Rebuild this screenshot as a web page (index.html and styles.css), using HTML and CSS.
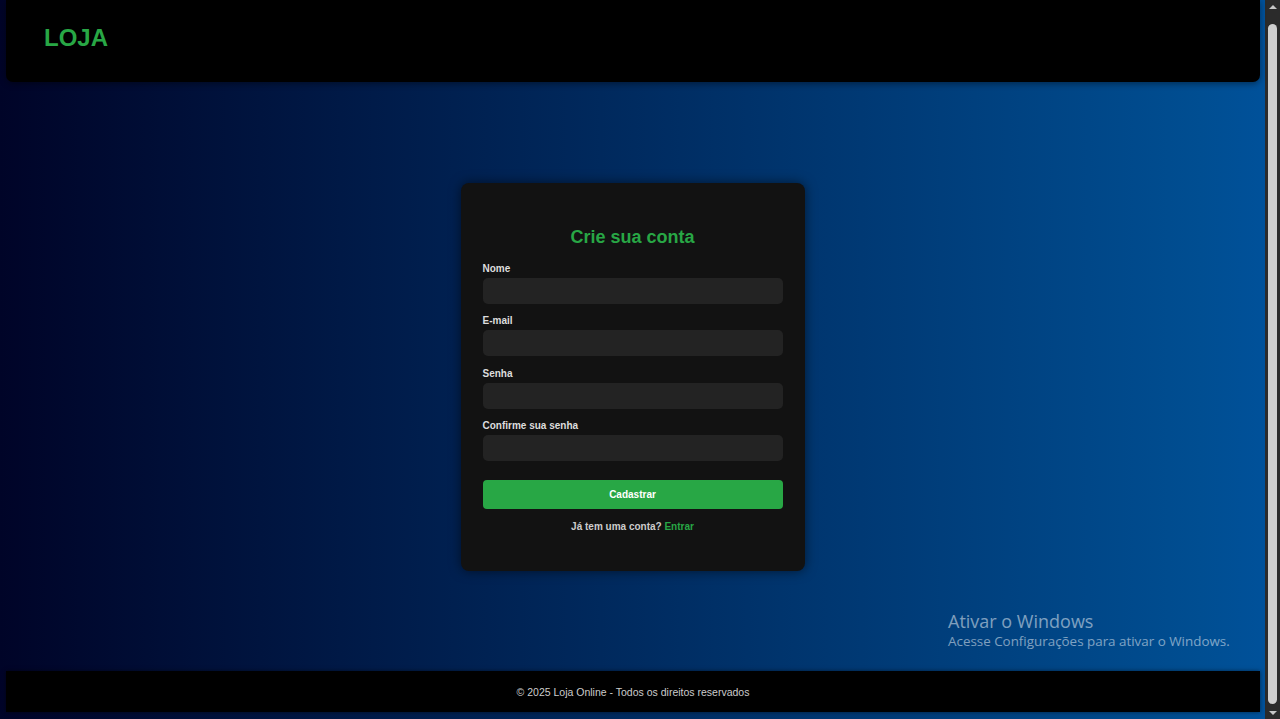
FILE: index.html
```html
<!DOCTYPE html>
<html lang="pt-BR">
<head>
<meta charset="utf-8">
<title>Loja - Cadastro</title>
<link rel="stylesheet" href="styles.css">
</head>
<body>
<div class="app">
  <div class="page">
    <header class="topbar">
      <h1 class="logo">LOJA</h1>
    </header>
    <main class="main">
      <form class="card">
        <h2 class="card-title">Crie sua conta</h2>
        <div class="field">
          <label class="label">Nome</label>
          <input class="input" type="text">
        </div>
        <div class="field">
          <label class="label">E-mail</label>
          <input class="input" type="email">
        </div>
        <div class="field">
          <label class="label">Senha</label>
          <input class="input" type="password">
        </div>
        <div class="field">
          <label class="label">Confirme sua senha</label>
          <input class="input" type="password">
        </div>
        <button class="btn" type="button">Cadastrar</button>
        <p class="alt">Já tem uma conta? <a class="alt-link" href="#">Entrar</a></p>
      </form>
    </main>
    <footer class="footer">© 2025 Loja Online - Todos os direitos reservados</footer>
    <div class="watermark">
      <div class="wm-title">Ativar o Windows</div>
      <div class="wm-sub">Acesse Configurações para ativar o Windows.</div>
    </div>
  </div>
  <div class="scrollbar">
    <span class="arrow arrow-up"></span>
    <span class="thumb"></span>
    <span class="arrow arrow-down"></span>
  </div>
</div>
</body>
</html>
```
FILE: styles.css
```css
html, body {
  margin: 0;
  padding: 0;
  height: 100%;
  overflow: hidden;
}
body {
  font-family: "Liberation Sans", Arial, sans-serif;
}
.app {
  display: flex;
  height: 719px;
}
.page {
  position: relative;
  flex: 1;
  display: flex;
  flex-direction: column;
  background: linear-gradient(to right, #000428, #004e92 95%, #00519a);
}
.topbar {
  height: 82px;
  box-sizing: border-box;
  margin: 0 5px 0 6px;
  padding: 24px 38px 0;
  background: #000;
  border-radius: 0 0 7px 7px;
  box-shadow: 0 2px 6px rgba(0, 0, 0, 0.4);
}
.logo {
  margin: 0;
  font-size: 24px;
  line-height: 28px;
  font-weight: bold;
  color: #28a745;
}
.main {
  flex: 1;
  display: flex;
  align-items: center;
  justify-content: center;
}
.card {
  width: 344px;
  box-sizing: border-box;
  padding: 44px 22px 38px;
  background: #121212;
  border-radius: 8px;
  box-shadow: 0 0 12px rgba(0, 0, 0, 0.55);
  display: flex;
  flex-direction: column;
}
.card-title {
  margin: 0 0 15px;
  font-size: 18px;
  line-height: 21px;
  font-weight: bold;
  color: #28a745;
  text-align: center;
}
.field {
  display: flex;
  flex-direction: column;
  margin-bottom: 11.5px;
}
.label {
  font-size: 10px;
  line-height: 12px;
  font-weight: bold;
  color: #dddddd;
  margin-bottom: 3px;
}
.input {
  height: 26px;
  box-sizing: border-box;
  border: none;
  border-radius: 5px;
  background: #232323;
  padding: 0 8px;
  margin: 0;
  outline: none;
}
.btn {
  margin-top: 7px;
  height: 29px;
  border: none;
  border-radius: 4px;
  background: #28a745;
  color: #fff;
  font-family: "Liberation Sans", Arial, sans-serif;
  font-size: 10px;
  font-weight: bold;
  padding: 0;
}
.alt {
  margin: 12px 0 0;
  font-size: 10px;
  line-height: 12px;
  font-weight: bold;
  color: #cccccc;
  text-align: center;
}
.alt-link {
  color: #28a745;
  text-decoration: none;
}
.footer {
  height: 41px;
  margin: 0 5px 7px 6px;
  background: #000;
  color: #cccccc;
  font-size: 10.5px;
  display: flex;
  align-items: center;
  justify-content: center;
  box-shadow: 0 0 4px rgba(0, 0, 0, 0.5);
}
.watermark {
  position: absolute;
  left: 948px;
  bottom: 68px;
  font-family: "Open Sans", "Noto Sans", sans-serif;
  color: rgba(255, 255, 255, 0.5);
  pointer-events: none;
}
.wm-title {
  font-size: 18px;
  line-height: 22px;
}
.wm-sub {
  font-size: 13.4px;
  line-height: 19px;
}
.scrollbar {
  width: 15px;
  background: #2b2b2b;
  display: flex;
  flex-direction: column;
  align-items: center;
  padding: 5px 0 4px;
  box-sizing: border-box;
}
.arrow {
  width: 0;
  height: 0;
  border-left: 4px solid transparent;
  border-right: 4px solid transparent;
}
.arrow-up {
  border-bottom: 4px solid #c6c6c6;
}
.arrow-down {
  border-top: 4px solid #c6c6c6;
}
.thumb {
  flex: 1;
  width: 9px;
  margin: 15px 0 7px;
  background: #cfcfcf;
  border-radius: 5px;
}
```
